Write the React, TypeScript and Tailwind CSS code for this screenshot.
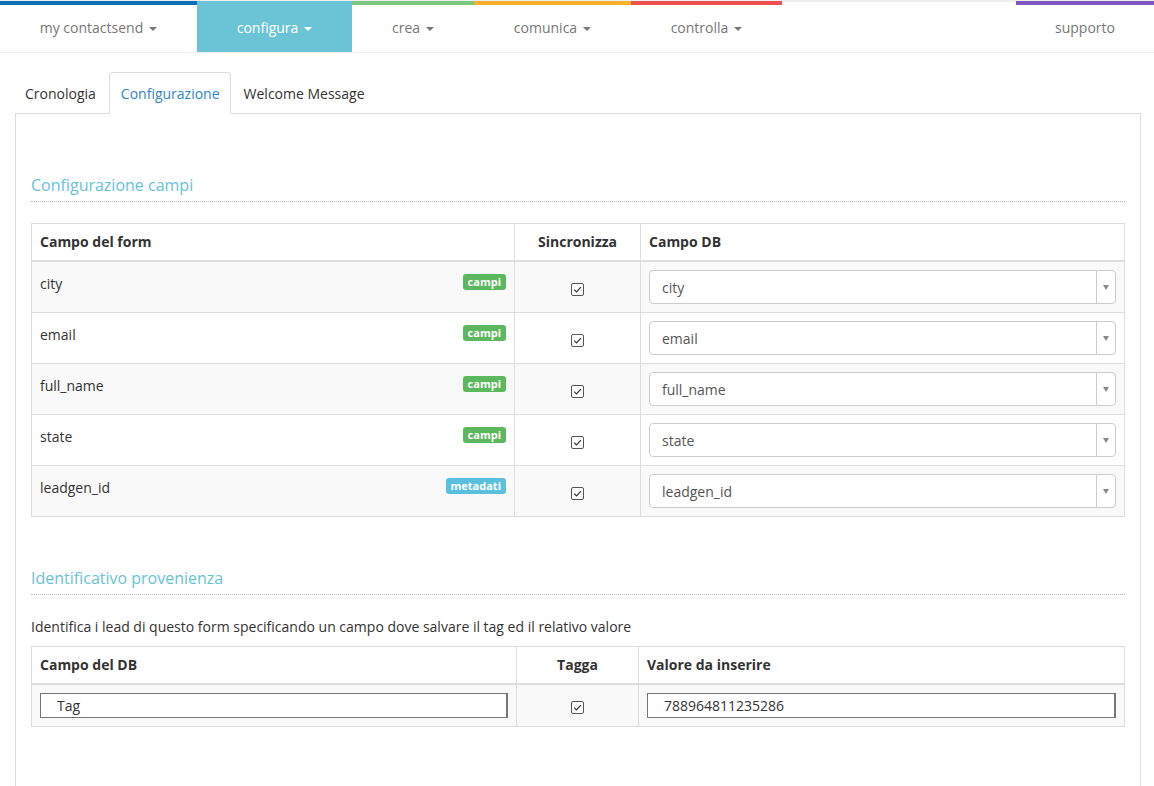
import React from "react";

const navItems = [
  { label: "my contactsend", w: "w-[197px]", bar: "border-t-[#0b6fb8]", active: false },
  { label: "configura", w: "w-[155px]", bar: "border-t-[#6ac4d5]", active: true },
  { label: "crea", w: "w-[122px]", bar: "border-t-[#7cc67f]", active: false },
  { label: "comunica", w: "w-[157px]", bar: "border-t-[#f9b02c]", active: false },
  { label: "controlla", w: "w-[151px]", bar: "border-t-[#ec5050]", active: false },
];

const fields = [
  { name: "city", tag: "campi", db: "city" },
  { name: "email", tag: "campi", db: "email" },
  { name: "full_name", tag: "campi", db: "full_name" },
  { name: "state", tag: "campi", db: "state" },
  { name: "leadgen_id", tag: "metadati", db: "leadgen_id" },
];

const Caret = () => (
  <span className="inline-block w-0 h-0 ml-[6px] align-middle border-x-[4px] border-x-transparent border-t-[4px] border-t-current" />
);

const Check = () => (
  <span className="inline-flex items-center justify-center w-[13px] h-[13px] border border-[#555] rounded-[2px] bg-white align-middle">
    <svg width="11" height="11" viewBox="0 0 11 11">
      <path d="M2.2 5.6 L4.5 7.9 L8.9 3.2" fill="none" stroke="#333" strokeWidth="1.2" />
    </svg>
  </span>
);

const SelectBox = ({ value }: { value: string }) => (
  <div className="flex h-[34px] border border-[#ccc] rounded-[4px] bg-white">
    <div className="flex-1 flex items-center pl-[12px] text-[14px] text-[#555]">{value}</div>
    <div className="w-[19px] border-l border-[#ccc] flex items-center justify-center">
      <span className="w-0 h-0 border-x-[3px] border-x-transparent border-t-[5px] border-t-[#888]" />
    </div>
  </div>
);

const SectionTitle = ({ children }: { children: React.ReactNode }) => (
  <h4 className="text-[16px] leading-[24px] text-[#68c2d8] pb-[4px] border-b border-dotted border-[#bbb]">
    {children}
  </h4>
);

export default function App() {
  return (
    <div className="min-h-[786px] bg-white text-[#333] text-[14px]" style={{ fontFamily: '"Open Sans", "Liberation Sans", sans-serif' }}>
      {/* top nav */}
      <div className="border-t-2 border-[#eee] border-b border-b-[#eee]">
        <div className="flex -mt-[1px]">
          {navItems.map((it) => (
            <div
              key={it.label}
              className={`${it.w} h-[51px] border-t-4 ${it.bar} flex items-center justify-center ${
                it.active ? "bg-[#6ac4d5] text-white" : "text-[#777]"
              }`}
            >
              <span className="-mt-[2px]">{it.label}</span>
              <Caret />
            </div>
          ))}
          <div className="flex-1" />
          <div className="w-[138px] h-[51px] border-t-4 border-t-[#7e57c2] flex items-center justify-center text-[#777]">
            <span className="-mt-[2px]">supporto</span>
          </div>
        </div>
      </div>

      {/* tabs */}
      <div className="pl-[14px] pr-[13px] mt-[18px]">
        <div className="flex items-end h-[42px]">
          <div className="px-[11px] h-[41px] flex items-center mr-[2px] -mb-px">Cronologia</div>
          <div className="pl-[11px] pr-[10px] h-[42px] flex items-center mr-[2px] border border-[#ddd] border-b-white rounded-t-[4px] text-[#3385c6] bg-white -mb-px relative z-10">
            Configurazione
          </div>
          <div className="px-[11px] h-[41px] flex items-center -mb-px">Welcome Message</div>
        </div>
        <div className="ml-px border border-[#ddd] border-b-0 px-[15px] pt-[59px] pb-[60px]">
          <SectionTitle>Configurazione campi</SectionTitle>

          <table className="w-full mt-[21px] border border-[#ddd] border-collapse table-fixed">
            <colgroup>
              <col className="w-[483px]" />
              <col className="w-[126px]" />
              <col />
            </colgroup>
            <thead>
              <tr className="border-b-2 border-[#ddd]">
                <th className="text-left font-bold px-[8px] py-[8px] leading-[20px] border-r border-[#ddd]">Campo del form</th>
                <th className="text-center font-bold px-[8px] py-[8px] leading-[20px] border-r border-[#ddd]">Sincronizza</th>
                <th className="text-left font-bold px-[8px] py-[8px] leading-[20px]">Campo DB</th>
              </tr>
            </thead>
            <tbody>
              {fields.map((f, i) => (
                <tr key={f.name} className={`border-t border-[#ddd] ${i % 2 === 0 ? "bg-[#f9f9f9]" : "bg-white"}`}>
                  <td className="align-top px-[8px] pt-[12px] leading-[20px] border-r border-[#ddd]">
                    <span
                      className={`float-right px-[5px] pt-[2px] pb-[3px] text-[11px] leading-none font-bold text-white rounded-[3px] ${
                        f.tag === "campi" ? "bg-[#5cb85c]" : "bg-[#5bc0de]"
                      }`}
                    >
                      {f.tag}
                    </span>
                    {f.name}
                  </td>
                  <td className="align-middle text-center px-[8px] border-r border-[#ddd]">
                    <span className="inline-block mt-[2px]">
                      <Check />
                    </span>
                  </td>
                  <td className="px-[8px] py-[8px] align-middle">
                    <SelectBox value={f.db} />
                  </td>
                </tr>
              ))}
            </tbody>
          </table>

          <div className="mt-[49px]">
            <SectionTitle>Identificativo provenienza</SectionTitle>
          </div>
          <p className="mt-[22px] leading-[20px]">
            Identifica i lead di questo form specificando un campo dove salvare il tag ed il relativo valore
          </p>

          <table className="w-full mt-[9px] border border-[#ddd] border-collapse table-fixed">
            <colgroup>
              <col className="w-[485px]" />
              <col className="w-[122px]" />
              <col />
            </colgroup>
            <thead>
              <tr className="border-b-2 border-[#ddd]">
                <th className="text-left font-bold px-[8px] py-[8px] leading-[20px] border-r border-[#ddd]">Campo del DB</th>
                <th className="text-center font-bold px-[8px] py-[8px] leading-[20px] border-r border-[#ddd]">Tagga</th>
                <th className="text-left font-bold px-[8px] py-[8px] leading-[20px]">Valore da inserire</th>
              </tr>
            </thead>
            <tbody>
              <tr className="bg-[#f9f9f9]">
                <td className="px-[8px] py-[8px] border-r border-[#ddd]">
                  <div className="h-[25px] bg-white border border-[#767676] border-r-2 flex items-center pl-[16px]">Tag</div>
                </td>
                <td className="text-center align-middle border-r border-[#ddd]">
                  <Check />
                </td>
                <td className="px-[8px] py-[8px]">
                  <div className="h-[25px] bg-white border border-[#767676] border-r-2 flex items-center pl-[16px]">788964811235286</div>
                </td>
              </tr>
            </tbody>
          </table>
        </div>
      </div>
    </div>
  );
}
